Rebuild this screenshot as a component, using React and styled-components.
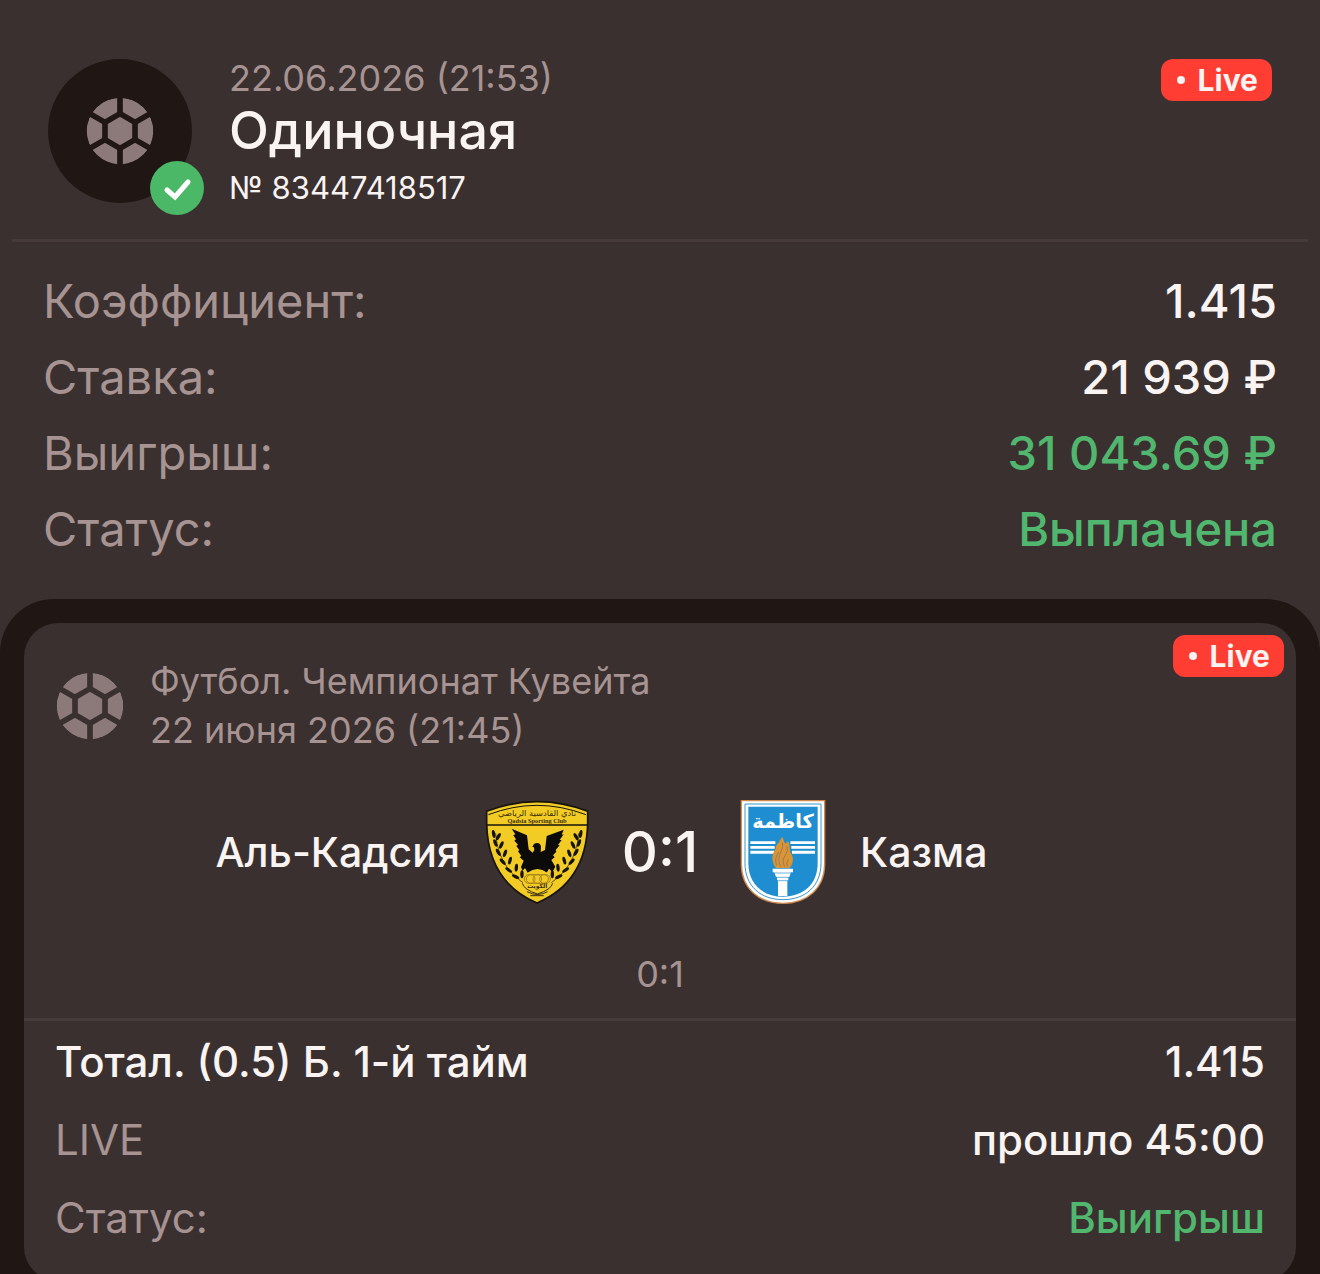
import React, { useId } from "react";
import styled, { createGlobalStyle, ThemeProvider } from "styled-components";

const theme = {
   color: {
      surface: "#3a302f",
      dark: "#201614",
      line: "#463b3a",
      text: "#f9f3f2",
      muted: "#a69392",
      icon: "#8b7a79",
      green: "#51b76e",
      red: "#ff3d33",
   },
   fontSize: {
      sm: "31px",
      md: "36px",
      team: "41px",
      lg: "42px",
      xl: "47px",
      title: "52px",
      score: "56px",
   },
};

const GlobalStyle = createGlobalStyle`
   * {
      box-sizing: border-box;
      margin: 0;
      padding: 0;
   }

   body {
      background-color: ${theme.color.surface};
      color: ${theme.color.text};
      font-family: Inter, "Liberation Sans", sans-serif;
   }
`;

const Header = styled.header`
   display: flex;
   align-items: flex-start;
   gap: 37px;
   margin: 0 12px;
   padding: 59px 36px 28px;
   border-bottom: 3px solid ${({ theme }) => theme.color.line};
`;

const Avatar = styled.div`
   position: relative;
   flex: none;
   display: flex;
   align-items: center;
   justify-content: center;
   width: 144px;
   height: 144px;
   border-radius: 50%;
   background-color: ${({ theme }) => theme.color.dark};
`;

const CheckMark = styled.span`
   position: absolute;
   right: -12px;
   bottom: -12px;
   display: flex;
   width: 54px;
   height: 54px;
   border-radius: 50%;
   background-color: #4bb868;
`;

const HeaderText = styled.div`
   flex: 1;
   min-width: 0;
`;

const BetDate = styled.p`
   font-size: ${({ theme }) => theme.fontSize.md};
   line-height: 38px;
   color: ${({ theme }) => theme.color.muted};
`;

const Title = styled.h1`
   font-size: ${({ theme }) => theme.fontSize.title};
   font-weight: 500;
   line-height: 68px;
`;

const BetNumber = styled.p`
   font-size: ${({ theme }) => theme.fontSize.sm};
   line-height: 46px;
`;

const LiveBadge = styled.span`
   display: flex;
   align-items: center;
   gap: 13px;
   height: 42px;
   padding: 0 14px 0 16px;
   border-radius: 12px;
   background-color: ${({ theme }) => theme.color.red};
   font-size: 30px;
   font-weight: 700;
   line-height: 42px;

   &::before {
      content: "";
      width: 8px;
      height: 8px;
      border-radius: 50%;
      background-color: currentColor;
   }
`;

const Rows = styled.dl`
   padding: ${({ $compact }) => ($compact ? "2px 31px 24px" : "21px 43px 32px")};
   font-size: ${({ theme, $compact }) =>
      $compact ? theme.fontSize.lg : theme.fontSize.xl};
   line-height: ${({ $compact }) => ($compact ? "78px" : "76px")};
`;

const Row = styled.div`
   display: flex;
   justify-content: space-between;
   gap: 24px;
`;

const Label = styled.dt`
   color: ${({ theme, $strong }) =>
      $strong ? theme.color.text : theme.color.muted};
   font-weight: ${({ $strong }) => ($strong ? 500 : 400)};
`;

const Value = styled.dd`
   color: ${({ theme, $won }) => ($won ? theme.color.green : theme.color.text)};
   font-weight: 500;
   text-align: right;
`;

const Panel = styled.section`
   padding: 24px;
   border-radius: 54px 54px 0 0;
   background-color: ${({ theme }) => theme.color.dark};
`;

const EventCard = styled.article`
   position: relative;
   border-radius: 34px;
   background-color: ${({ theme }) => theme.color.surface};
`;

const CornerBadge = styled(LiveBadge)`
   position: absolute;
   top: 12px;
   right: 12px;
   line-height: 38px;
`;

const EventHead = styled.div`
   display: flex;
   align-items: center;
   gap: 26px;
   padding: 34px 32px 0;
   font-size: ${({ theme }) => theme.fontSize.md};
   line-height: 49px;
   color: ${({ theme }) => theme.color.muted};
`;

const Match = styled.div`
   display: grid;
   grid-template-columns: 1fr 142px 1fr;
   align-items: center;
   margin-top: 45px;
`;

const Team = styled.div`
   display: flex;
   align-items: center;
   justify-content: ${({ $home }) => ($home ? "flex-end" : "flex-start")};
   gap: 25px;
   font-size: ${({ theme }) => theme.fontSize.team};
   font-weight: 500;
`;

const Score = styled.p`
   font-size: ${({ theme }) => theme.fontSize.score};
   font-weight: 500;
   text-align: center;
`;

const PeriodScore = styled.p`
   padding: 46px 0 20px;
   border-bottom: 3px solid ${({ theme }) => theme.color.line};
   font-size: ${({ theme }) => theme.fontSize.md};
   line-height: 48px;
   text-align: center;
   color: ${({ theme }) => theme.color.muted};
`;

const BallSvg = styled.svg`
   flex: none;
   width: 68px;
   height: 68px;
   color: ${({ theme }) => theme.color.icon};
`;

const CrestSvg = styled.svg`
   flex: none;
   width: 104px;
   height: 104px;
`;

const BallIcon = () => {
   const id = useId();

   return (
      <BallSvg viewBox="-102 -102 204 204" aria-hidden="true">
         <mask id={id} maskUnits="userSpaceOnUse" x="-102" y="-102" width="204" height="204">
            <circle r="100" fill="#fff" />
            <g stroke="#000" strokeWidth="17" fill="none">
               <path d="M0 -52 45 -26V26L0 52 -45 26V-26Z" />
               <path d="M0 -52V-104M0 52V104M45 -26 92 -53M45 26 92 53M-45 -26 -92 -53M-45 26 -92 53" />
            </g>
         </mask>
         <circle r="100" fill="currentColor" mask={`url(#${id})`} />
      </BallSvg>
   );
};

// x, y and rotation of each leaf on the left branch
const leaves = [
   [72, 160, -10],
   [86, 168, 30],
   [77, 187, -20],
   [95, 193, 25],
   [86, 215, -30],
   [106, 218, 20],
   [99, 243, -42],
   [121, 240, 15],
   [117, 268, -55],
   [140, 261, 5],
   [138, 288, -65],
   [157, 281, 0],
];

const Branch = () => (
   <g>
      <path
         d="M78 158Q82 222 118 268 138 292 160 306"
         fill="none"
         stroke="#16130c"
         strokeWidth="2"
      />
      {leaves.map(([x, y, angle]) => (
         <ellipse
            key={`${x}-${y}`}
            rx="5"
            ry="12"
            fill="#16130c"
            transform={`translate(${x} ${y}) rotate(${angle})`}
         />
      ))}
   </g>
);

const QadsiaCrest = () => (
   <CrestSvg viewBox="46 58 312 312" role="img" aria-label="Аль-Кадсия">
      <path
         d="M51 92Q124 63 202 63T354 92V128C352 222 318 318 202 367 86 318 53 222 51 128Z"
         fill="#f2cc24"
         stroke="#16130c"
         strokeWidth="5"
      />
      <path d="M56 102Q130 74 202 74T349 102" fill="none" stroke="#16130c" strokeWidth="3" />
      <path d="M52 133H353" stroke="#16130c" strokeWidth="4" />
      <text
         x="202"
         y="107"
         fontFamily="DejaVu Sans, sans-serif"
         fontSize="25"
         textAnchor="middle"
         fill="#3a2f10"
      >
         نادي القادسية الرياضي
      </text>
      <text
         x="202"
         y="128"
         fontFamily="Liberation Serif, serif"
         fontSize="19"
         fontWeight="700"
         textAnchor="middle"
         fill="#3a2f10"
      >
         Qadsia Sporting Club
      </text>
      <Branch />
      <g transform="translate(405 0) scale(-1 1)">
         <Branch />
      </g>
      <path
         d="M126 144 172 164 177 206 189 216 194 208 193 200 188 199 193 190Q202 184 211 190L214 198 213 214 226 208 231 166 282 147 276 162 282 161 270 178 276 178 265 193 270 194 258 208 260 213 250 224 255 230 245 238 257 258 248 274 238 264 231 276Q202 262 174 276L166 262 159 270 154 259 162 240 150 230 155 226 145 212 149 208 140 196 145 192 134 180 139 176 131 164 137 161Z"
         fill="#0c0b0a"
      />
      <path d="M174 276Q203 254 233 276L229 284H177Z" fill="#f2cc24" />
      <g fill="none" stroke="#a8841a" strokeWidth="3">
         <rect x="164" y="282" width="78" height="26" rx="13" />
         <circle cx="183" cy="295" r="13" />
         <circle cx="203" cy="295" r="13" />
         <circle cx="223" cy="295" r="13" />
      </g>
      <text
         x="203"
         y="322"
         fontFamily="DejaVu Sans, sans-serif"
         fontSize="18"
         fontWeight="700"
         textAnchor="middle"
         fill="#3a2f10"
      >
         الكويت
      </text>
      <path
         d="M158 308Q163 327 203 340 244 327 249 308M172 333Q203 350 234 333M182 345H222"
         fill="none"
         stroke="#3a2f10"
         strokeWidth="3"
      />
   </CrestSvg>
);

const KazmaCrest = () => (
   <CrestSvg viewBox="35 60 312 312" role="img" aria-label="Казма">
      <path
         d="M66 62H316V252C316 326 262 370 191 370S66 326 66 252Z"
         fill="#fff"
         stroke="#cf8a4e"
         strokeWidth="4"
      />
      <path
         d="M77 72H305V250C305 318 258 359 191 359S77 318 77 250Z"
         fill="#fff"
         stroke="#3b97cc"
         strokeWidth="3"
      />
      <path d="M87 80H295V250C295 312 252 350 191 350S87 312 87 250Z" fill="#1f8ed0" />
      <text
         x="191"
         y="144"
         fontFamily="DejaVu Sans, sans-serif"
         fontSize="58"
         fontWeight="700"
         textAnchor="middle"
         fill="#fff"
      >
         كاظمة
      </text>
      <path
         d="M93 184H168V192H93ZM93 198H166V206H93ZM93 212H164V221H93ZM213 184H287V192H213ZM216 198H287V206H216ZM218 212H287V221H218Z"
         fill="#fff"
      />
      <path
         d="M170 264C154 244 158 222 168 208 170 196 174 190 180 187 180 180 186 176 188 170 194 178 193 186 198 191L206 184C214 198 209 209 214 218L219 228C224 246 216 258 210 264Z"
         fill="#dc9433"
      />
      <path
         d="M172 256Q164 236 178 216M184 260Q172 238 186 212 193 198 189 188M196 260Q186 242 198 226 208 212 203 198M206 260Q198 250 208 238"
         fill="none"
         stroke="#8d7f62"
         strokeWidth="3"
      />
      <path d="M160 266H221V277H215L210 291H207V301H204V348H176V301H173V291H170L165 277H160Z" fill="#fff" />
      <path d="M166 279H215M171 292H209M175 302H205" stroke="#1f8ed0" strokeWidth="2" />
   </CrestSvg>
);

const App = () => {
   return (
      <ThemeProvider theme={theme}>
         <GlobalStyle />
         <main>
            <Header>
               <Avatar>
                  <BallIcon />
                  <CheckMark>
                     <svg viewBox="0 0 54 54" fill="none" aria-hidden="true">
                        <path d="M17 29 25 36 38 21" stroke="#fff" strokeWidth="5" strokeLinecap="round" />
                     </svg>
                  </CheckMark>
               </Avatar>
               <HeaderText>
                  <BetDate>22.06.2026 (21:53)</BetDate>
                  <Title>Одиночная</Title>
                  <BetNumber>№ 83447418517</BetNumber>
               </HeaderText>
               <LiveBadge>Live</LiveBadge>
            </Header>

            <Rows>
               <Row>
                  <Label>Коэффициент:</Label>
                  <Value>1.415</Value>
               </Row>
               <Row>
                  <Label>Ставка:</Label>
                  <Value>21 939 ₽</Value>
               </Row>
               <Row>
                  <Label>Выигрыш:</Label>
                  <Value $won>31 043.69 ₽</Value>
               </Row>
               <Row>
                  <Label>Статус:</Label>
                  <Value $won>Выплачена</Value>
               </Row>
            </Rows>

            <Panel>
               <EventCard>
                  <CornerBadge>Live</CornerBadge>
                  <EventHead>
                     <BallIcon />
                     <div>
                        <p>Футбол. Чемпионат Кувейта</p>
                        <p>22 июня 2026 (21:45)</p>
                     </div>
                  </EventHead>
                  <Match>
                     <Team $home>
                        <span>Аль-Кадсия</span>
                        <QadsiaCrest />
                     </Team>
                     <Score>0:1</Score>
                     <Team>
                        <KazmaCrest />
                        <span>Казма</span>
                     </Team>
                  </Match>
                  <PeriodScore>0:1</PeriodScore>
                  <Rows $compact>
                     <Row>
                        <Label $strong>Тотал. (0.5) Б. 1-й тайм</Label>
                        <Value>1.415</Value>
                     </Row>
                     <Row>
                        <Label>LIVE</Label>
                        <Value>прошло 45:00</Value>
                     </Row>
                     <Row>
                        <Label>Статус:</Label>
                        <Value $won>Выигрыш</Value>
                     </Row>
                  </Rows>
               </EventCard>
            </Panel>
         </main>
      </ThemeProvider>
   );
};

export default App;
